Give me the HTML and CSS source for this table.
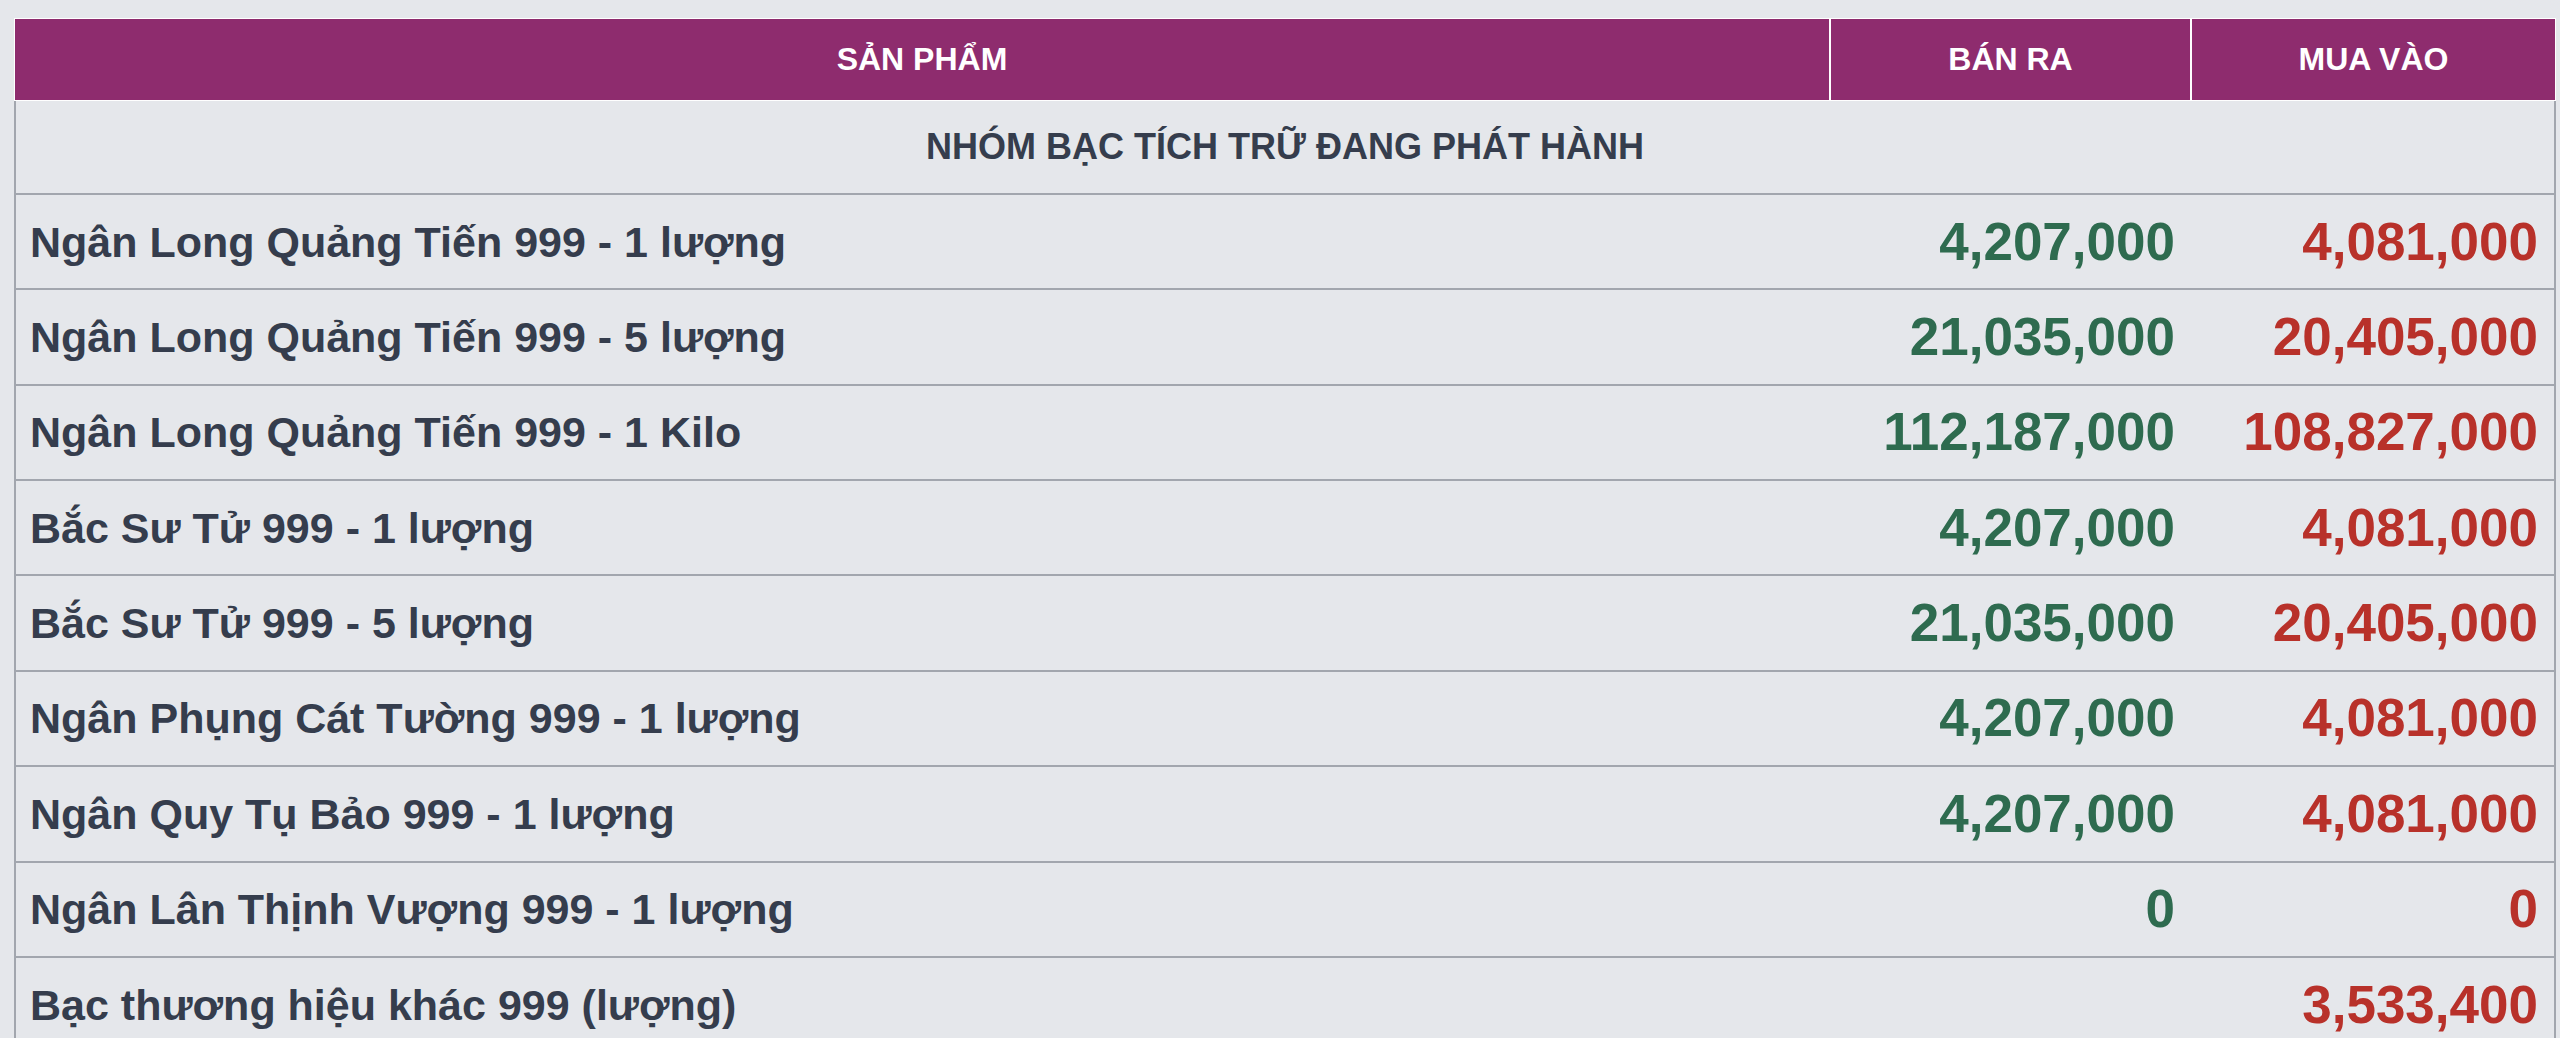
FILE: index.html
```html
<!DOCTYPE html>
<html lang="vi">
<head>
<meta charset="utf-8">
<title>Giá bạc</title>
<link rel="stylesheet" href="styles.css">
</head>
<body>
<div class="page">
  <table class="price-table">
    <colgroup>
      <col class="col-name">
      <col class="col-sell">
      <col class="col-buy">
    </colgroup>
    <thead>
      <tr>
        <th>SẢN PHẨM</th>
        <th>BÁN RA</th>
        <th>MUA VÀO</th>
      </tr>
    </thead>
    <tbody>
      <tr class="group-row">
        <td colspan="3">NHÓM BẠC TÍCH TRỮ ĐANG PHÁT HÀNH</td>
      </tr>
      <tr>
        <td class="name">Ngân Long Quảng Tiến 999 - 1 lượng</td>
        <td class="sell">4,207,000</td>
        <td class="buy">4,081,000</td>
      </tr>
      <tr>
        <td class="name">Ngân Long Quảng Tiến 999 - 5 lượng</td>
        <td class="sell">21,035,000</td>
        <td class="buy">20,405,000</td>
      </tr>
      <tr>
        <td class="name">Ngân Long Quảng Tiến 999 - 1 Kilo</td>
        <td class="sell">112,187,000</td>
        <td class="buy">108,827,000</td>
      </tr>
      <tr>
        <td class="name">Bắc Sư Tử 999 - 1 lượng</td>
        <td class="sell">4,207,000</td>
        <td class="buy">4,081,000</td>
      </tr>
      <tr>
        <td class="name">Bắc Sư Tử 999 - 5 lượng</td>
        <td class="sell">21,035,000</td>
        <td class="buy">20,405,000</td>
      </tr>
      <tr>
        <td class="name">Ngân Phụng Cát Tường 999 - 1 lượng</td>
        <td class="sell">4,207,000</td>
        <td class="buy">4,081,000</td>
      </tr>
      <tr>
        <td class="name">Ngân Quy Tụ Bảo 999 - 1 lượng</td>
        <td class="sell">4,207,000</td>
        <td class="buy">4,081,000</td>
      </tr>
      <tr>
        <td class="name">Ngân Lân Thịnh Vượng 999 - 1 lượng</td>
        <td class="sell">0</td>
        <td class="buy">0</td>
      </tr>
      <tr>
        <td class="name">Bạc thương hiệu khác 999 (lượng)</td>
        <td class="sell"></td>
        <td class="buy">3,533,400</td>
      </tr>
    </tbody>
  </table>
</div>
</body>
</html>
```

FILE: styles.css
```css
html, body {
  margin: 0;
  padding: 0;
  background: #e5e7eb;
}

body {
  font-family: "Liberation Sans", Arial, sans-serif;
  color: #353d4d;
}

.page {
  padding: 18px 4px 0 14px;
}

.price-table {
  width: 2542px;
  table-layout: fixed;
  border-collapse: separate;
  border-spacing: 0;
}

.col-name { width: 1816px; }
.col-sell { width: 361px; }
.col-buy { width: 365px; }

.price-table th {
  background: #8e2c6e;
  color: #ffffff;
  font-size: 32px;
  font-weight: 700;
  line-height: 37px;
  padding: 22px 8px 21.5px;
  border: 1px solid #ffffff;
  text-align: center;
}

.price-table td {
  padding: 20.7px 16px;
  font-weight: 700;
  line-height: 52px;
  border-bottom: 2px solid #a2a6ae;
  vertical-align: middle;
}

.price-table td:first-child {
  border-left: 2px solid #a2a6ae;
}

.price-table td:last-child {
  border-right: 2px solid #a2a6ae;
}

.price-table .group-row td {
  text-align: center;
  font-size: 36px;
  padding-top: 20.2px;
  padding-bottom: 20.2px;
}

.name {
  font-size: 43px;
  text-align: left;
}

.price-table td.name {
  padding-left: 14px;
}

.sell,
.buy {
  font-size: 53px;
  text-align: right;
}

.sell {
  color: #2e6b4f;
}

.buy {
  color: #b8312a;
}
```
